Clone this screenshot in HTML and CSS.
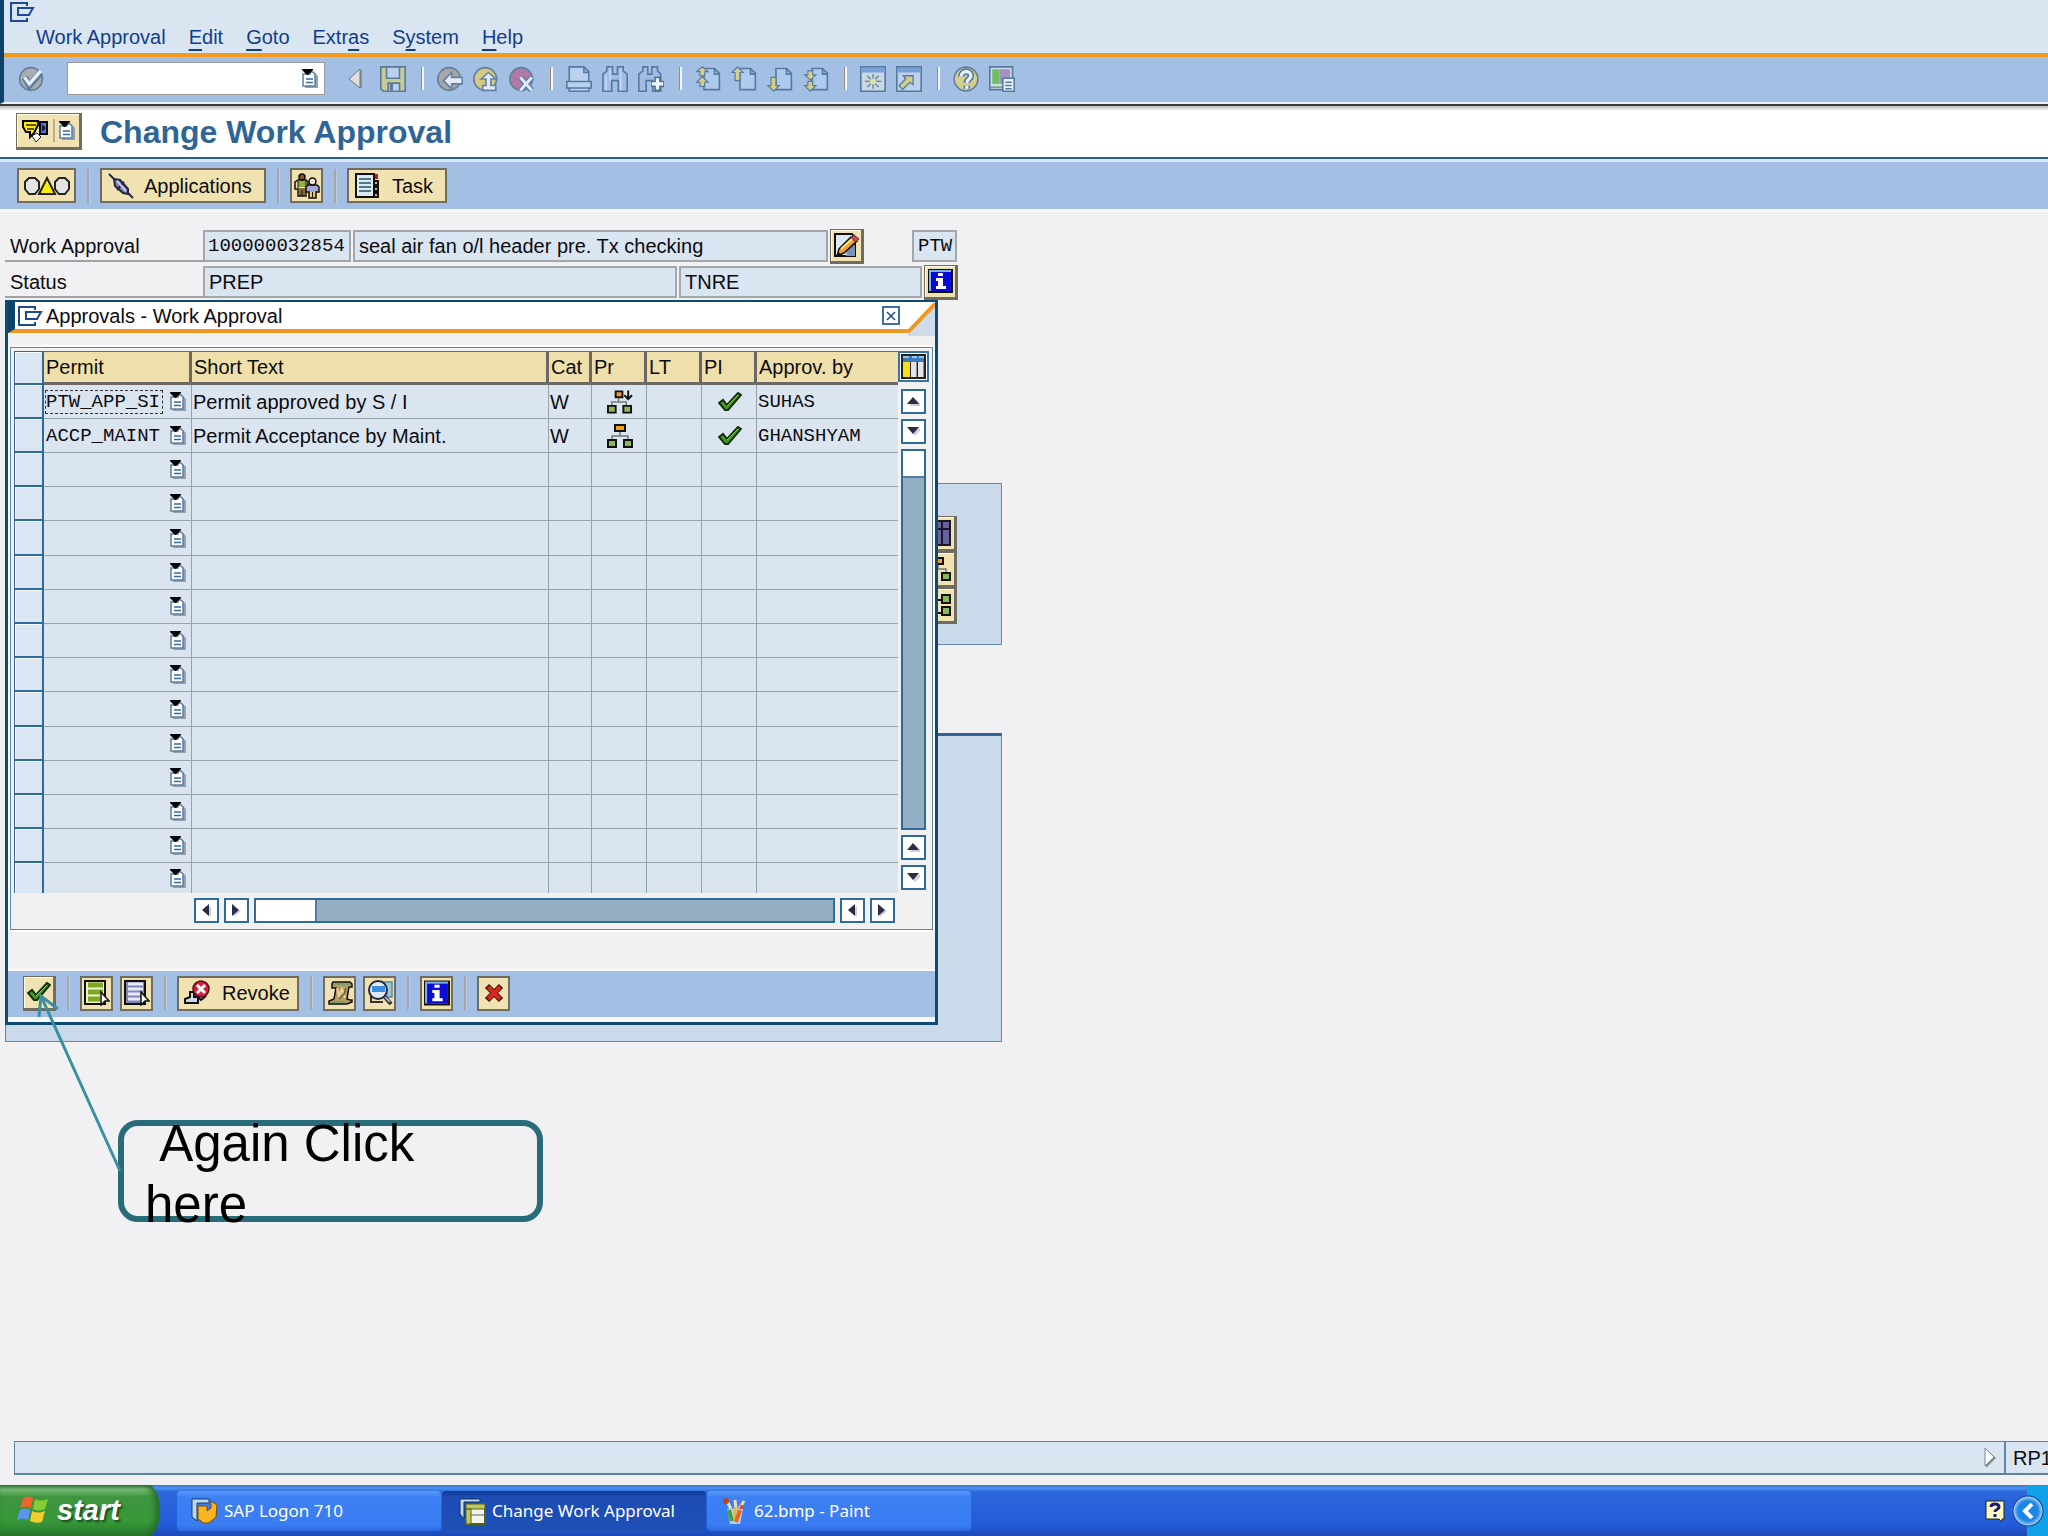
FILE: index.html
```html
<!DOCTYPE html>
<html lang="en">
<head>
<meta charset="utf-8">
<title>Change Work Approval</title>
<link rel="stylesheet" href="styles.css">
</head>
<body>
<svg class="defs" aria-hidden="true">
  <symbol id="i-win" viewBox="0 0 25 20"><path d="M17 4V1H1V19H17V16M8 6H23L19 13H8Z" fill="none" stroke="#1d4a96" stroke-width="2"/></symbol>
  <symbol id="i-list" viewBox="0 0 16 19"><path d="M3 4H13L16 7V19H3Z" fill="#93a0ae"/><path d="M1 5V17H13V5L11 3H8V5Z" fill="#fff" stroke="#5f7f9f" stroke-width="1.500"/><path d="M4 10H11M4 13.500H11" stroke="#3a6a9c" stroke-width="1.500"/><path d="M0 0H11V1L6 6H5L0 1Z" fill="#000"/></symbol>
  <symbol id="i-ok" viewBox="0 0 16 16"><circle cx="8" cy="8" r="7" fill="#a9adb0" stroke="#627f9e"/><path d="M4 7L7 12L14 4" fill="none" stroke="#5f7f9f" stroke-width="4"/><path d="M4 7L7 11L14 3" fill="none" stroke="#e6eefb" stroke-width="2"/></symbol>
  <symbol id="i-left" viewBox="0 0 16 22"><path d="M14 1V21L3 11Z" fill="#8f8f8f"/><path d="M12 1V20L1 11Z" fill="#dfdfdf" stroke="#777"/></symbol>
  <symbol id="i-save" viewBox="0 0 16 16"><path d="M.5 .5H15.500V15.500H2L.5 14Z" fill="#c9cb96" stroke="#5b7c98"/><path d="M4 .5H12V7.500H4ZM5 10.500H12V15.500H5Z" fill="#b9d0ee" stroke="#5b7c98"/><path d="M6 11V15H8V11Z" fill="#5b7c98"/></symbol>
  <symbol id="i-back" viewBox="0 0 16 16"><circle cx="7.500" cy="8" r="7" fill="#aaa6a8" stroke="#627f9e"/><path d="M4 9L9 4V7H15.500V11H9V14Z" fill="#e3eafa" stroke="#5f83a8"/></symbol>
  <symbol id="i-up" viewBox="0 0 16 16"><circle cx="7.500" cy="8" r="7" fill="#d3cb84" stroke="#627f9e"/><path d="M5 8L9.500 4L14 8H11V12H14V15H6V12H8V8Z" fill="#e3eafa" stroke="#5f83a8"/></symbol>
  <symbol id="i-stop" viewBox="0 0 16 16"><circle cx="7.500" cy="8" r="7" fill="#b07aa6" stroke="#627f9e"/><path d="M7 7L14 15M14 7L7 15" stroke="#5f83a8" stroke-width="3.500"/><path d="M7 7L14 15M14 7L7 15" stroke="#e3eafa" stroke-width="1.800"/></symbol>
  <symbol id="i-print" viewBox="0 0 16 16"><path d="M2 10V.5H11L14 3.500V10M11 .5V4H14M.5 9.500H15.500V13.500H14V15.500H2V13.500H.5ZM1 13.500H15" fill="#b9d0f0" stroke="#567a9e"/></symbol>
  <symbol id="i-find" viewBox="0 0 16 16"><path d="M.5 15.500V5L3 3V.5H6.500V5H9.500V.5H13V3L15.500 5V15.500H10V9H6V15.500Z" fill="#a3bce6" stroke="#567a9e"/><path d="M2.500 6V15M5 1V9M11.500 1V15" stroke="#c3d5f3"/></symbol>
  <symbol id="i-findn" viewBox="0 0 16 16"><path d="M.5 15.500V5L3 3V.5H6V5H8.500V.5H12V3L14 5V15.500H9V9H5V15.500Z" fill="#a3bce6" stroke="#567a9e"/><path d="M12 6.500V15.500M8 11H16" stroke="#4f7394" stroke-width="4"/><path d="M12 7.500V14.500M8.500 11H15.500" stroke="#eef5ff" stroke-width="2"/></symbol>
  <symbol id="i-page" viewBox="0 0 16 16"><path d="M5.500 1.500H12L15 4.500V14.500H5.500ZM12 1.500V5H15" fill="#aecbee" stroke="#567a9e"/></symbol>
  <symbol id="i-first" viewBox="0 0 16 16"><use href="#i-page"/><path d="M1 3.500L4.500 .5L8 3.500H6V6H3V3.500ZM1 10L4.500 6.500L8 10H6V12.500H3V10Z" fill="#d4ce86" stroke="#567a9e" stroke-width=".7"/></symbol>
  <symbol id="i-prev" viewBox="0 0 16 16"><use href="#i-page"/><path d="M.5 4L4 .5L7.500 4H5.500V9H2.500V4Z" fill="#d4ce86" stroke="#567a9e" stroke-width=".7"/></symbol>
  <symbol id="i-next" viewBox="0 0 16 16"><use href="#i-page"/><path d="M.5 12L4 15.500L7.500 12H5.500V7H2.500V12Z" fill="#d4ce86" stroke="#567a9e" stroke-width=".7"/></symbol>
  <symbol id="i-last" viewBox="0 0 16 16"><use href="#i-page"/><path d="M1 5.500L4.500 8.500L8 5.500H6V3H3V5.500ZM1 12L4.500 15.500L8 12H6V9.500H3V12Z" fill="#d4ce86" stroke="#567a9e" stroke-width=".7"/></symbol>
  <symbol id="i-new" viewBox="0 0 16 16"><path d="M.5 .5H15.500V15.500H.5Z" fill="#c8d6e6" stroke="#567a9e"/><path d="M1 1H15V4H1Z" fill="#77a0d8"/><path d="M8 5V14M3 9.500H13M4.500 6L11.500 13M11.500 6L4.500 13" stroke="#63808c" stroke-width=".8"/><circle cx="8" cy="9.500" r="1.800" fill="#e2e7a0"/></symbol>
  <symbol id="i-short" viewBox="0 0 16 16"><path d="M.5 .5H15.500V15.500H.5Z" fill="#bdd1ee" stroke="#567a9e"/><path d="M1 1H15V4H1Z" fill="#77a0d8"/><path d="M2 12L6 8L4.500 6H10.500V11.500L8.500 10L4 14.500Z" fill="#d4ce86" stroke="#567a9e" stroke-width=".8"/></symbol>
  <symbol id="i-help" viewBox="0 0 16 16"><circle cx="8" cy="8" r="7.300" fill="#d5cf8d" stroke="#627f9e"/><path d="M5 6.500C5 2.500 11 2.500 11 6C11 8 8.500 8 8.500 10.500M8.500 12V14" fill="none" stroke="#567a9e" stroke-width="4"/><path d="M5 6.500C5 2.500 11 2.500 11 6C11 8 8.500 8 8.500 10.500M8.500 12V14" fill="none" stroke="#e8effa" stroke-width="2"/></symbol>
  <symbol id="i-layout" viewBox="0 0 16 16"><path d="M.5 .5H14.500V12L13 14.500H.5Z" fill="#cfdcec" stroke="#567a9e"/><path d="M2 2H6.500V11H2Z" fill="#6fbf62"/><path d="M6.500 2H13V11H6.500Z" fill="#a58fc4"/><path d="M1 13H9" stroke="#6fa27a"/><path d="M8.500 7.500H15.500V15.500H8.500Z" fill="#eaf1fb" stroke="#567a9e"/><path d="M10 10H14M10 12H14M10 14H14" stroke="#567a9e" stroke-width=".8"/></symbol>
  <symbol id="i-svc" viewBox="0 0 27 24"><path d="M1 2H16V6L12 14L8 18V13H4L1 8Z" fill="#ffe90a" stroke="#000" stroke-width="2"/><path d="M4 6H14M5 10H12" stroke="#5a5200" stroke-width="2"/><path d="M18 3H25V15H18Z" fill="#3d86d8" stroke="#000" stroke-width="2"/><path d="M20 5L24 9L20 13Z" fill="#001a55"/><path d="M10 17L15 14L19 18L14 23Z" fill="#fff" stroke="#222"/></symbol>
  <symbol id="i-light" viewBox="0 0 48 20"><path d="M6 2H12L16 6V13L12 18H6L2 13V6Z" fill="#e4e4e4" stroke="#222" stroke-width="2"/><path d="M36 2H42L46 6V13L42 18H36L32 13V6Z" fill="#e4e4e4" stroke="#222" stroke-width="2"/><path d="M24 2L32 18H16Z" fill="#ffee00" stroke="#222" stroke-width="2"/></symbol>
  <symbol id="i-plug" viewBox="0 0 26 26"><path d="M1 1L25 25" stroke="#26263c" stroke-width="2"/><path d="M6 6L12 7L20 16L20 21L15 20L7 13Z" fill="#7f80b8" stroke="#26263c" stroke-width="2"/><path d="M16 9L9 17" stroke="#26263c" stroke-width="2"/><path d="M9 8L18 18" stroke="#c6c8ea" stroke-width="2"/></symbol>
  <symbol id="i-people" viewBox="0 0 26 26"><path d="M4 8H12V14H4Z" fill="#8fb23e"/><path d="M5 15H11V23H5Z" fill="#8a6a38"/><path d="M4 7H12L14 9V16H12V23H4V16H1V9Z" fill="none" stroke="#111" stroke-width="1.500"/><path d="M8 17V23M4 8V15M12 8V15" stroke="#111"/><circle cx="8" cy="4" r="3" fill="#8a5a28" stroke="#111" stroke-width="1.500"/><path d="M14 12H23L25 14V19H22V25H15V19H12V14Z" fill="#a6a8d4" stroke="#111" stroke-width="1.500"/><path d="M16 19H21V24H16Z" fill="#ecc870"/><path d="M18.500 19V24" stroke="#111"/><circle cx="18.500" cy="8.500" r="3.500" fill="#f2e4cf" stroke="#111" stroke-width="1.500"/></symbol>
  <symbol id="i-task" viewBox="0 0 26 26"><path d="M2 1H20V24H2Z" fill="#dfeaf0" stroke="#111" stroke-width="2"/><path d="M5 6H17M5 10H17M5 14H17M5 18H17" stroke="#4c7a88" stroke-width="2"/><path d="M21 1H24V6H21Z" fill="#c01818"/><path d="M20 8H24V12H20ZM20 14H24V18H20ZM20 20H24V24H20Z" fill="#c9c060" stroke="#111" stroke-width="2"/></symbol>
  <symbol id="i-edit" viewBox="0 0 26 26"><path d="M2 2H19L22 5V24H2Z" fill="#dce8f4" stroke="#111" stroke-width="2"/><path d="M15 13H22V24H13Z" fill="#7b93b2"/><path d="M4 24L6 17L18 5L24 9L11 21Z" fill="#f2a028" stroke="#111" stroke-width="1.500"/><path d="M18 6L21 3L26 7L23 10Z" fill="#c2504a" stroke="#58304a"/><path d="M8 17L19 7" stroke="#ffdf9a" stroke-width="2"/><path d="M4 25L5 20L9 23Z" fill="#111"/></symbol>
  <symbol id="i-info" viewBox="0 0 25 24"><path d="M0 0H25V24H0Z" fill="#111"/><path d="M1 1H23V22H1Z" fill="#7fb0e8"/><path d="M3 3H23V22H3Z" fill="#0b0bd8"/><path d="M10 4H15V7H10ZM8 9H15V17H18V20H8V17H10V12H8Z" fill="#fff"/></symbol>
  <symbol id="i-cfg" viewBox="0 0 25 25"><path d="M0 0H25V25H0Z" fill="#222"/><path d="M2 2H23V8H2Z" fill="#3d7cba"/><path d="M2 3H8M11 3H16M18 3H23" stroke="#9cc4e6" stroke-width="2"/><path d="M2 8H9V23H2Z" fill="#f6e01e"/><path d="M10 8H16V23H10ZM17 8H23V23H17Z" fill="#e2e4e8"/><path d="M15.500 8V23M22.500 8V23" stroke="#8d9096"/></symbol>
  <symbol id="i-check" viewBox="0 0 24 20"><path d="M1 11L5 8L9 13L20 1L23 3L10 18H7Z" fill="#4a9a20" stroke="#10300a" stroke-width="2"/><path d="M9 14L20 3" stroke="#8ccc55"/></symbol>
  <symbol id="i-tree" viewBox="0 0 26 24"><path d="M13 8V12M5 16V12H21V16" fill="none" stroke="#777" stroke-width="1.500"/><path d="M8 1H18V7H8Z" fill="#f0a020" stroke="#111" stroke-width="2"/><path d="M1 16H9V23H1ZM17 16H25V23H17Z" fill="#8cb858" stroke="#111" stroke-width="2"/></symbol>
  <symbol id="i-treed" viewBox="0 0 27 24"><path d="M12 8V12M5 16V12H20V16" fill="none" stroke="#777" stroke-width="1.500"/><path d="M9 1H16V7H9Z" fill="#f0a020" stroke="#111" stroke-width="2"/><path d="M1 16H9V23H1ZM17 16H25V23H17Z" fill="#8cb858" stroke="#111" stroke-width="2"/><path d="M22 0V9M18 5L22 9L26 5" fill="none" stroke="#111" stroke-width="2"/></symbol>
  <symbol id="i-treeh" viewBox="0 0 26 24"><path d="M9 3H12V20H18M12 7H18" fill="none" stroke="#111" stroke-width="2"/><path d="M17 2H25V10H17ZM17 14H25V22H17Z" fill="#8cb858" stroke="#111" stroke-width="2"/></symbol>
  <symbol id="i-grid" viewBox="0 0 26 26"><path d="M1 1H25V25H1ZM1 9H25M9 1V25M17 1V25" fill="#66639c" stroke="#1a1728" stroke-width="2"/></symbol>
  <symbol id="i-selall" viewBox="0 0 26 26"><path d="M1 1H21V24H1Z" fill="#eef4d0" stroke="#111" stroke-width="2"/><path d="M4 5H19M4 12H19M4 19H16" stroke="#7fa81c" stroke-width="5"/><path d="M17 12L25 21L21 21L17 25Z" fill="#fff" stroke="#111" stroke-width="1.500"/></symbol>
  <symbol id="i-desel" viewBox="0 0 26 26"><path d="M1 1H21V24H1Z" fill="#8085b8" stroke="#111" stroke-width="2"/><path d="M4 4H19M4 9H19M4 14H17M4 19H17" stroke="#e8eaf8" stroke-width="3"/><path d="M17 12L25 21L21 21L17 25Z" fill="#fff" stroke="#111" stroke-width="1.500"/></symbol>
  <symbol id="i-revoke" viewBox="0 0 26 26"><path d="M6 12H10V17H14V23H1V19L6 17Z" fill="#cfd8e6" stroke="#111" stroke-width="2"/><path d="M13 16L17 20L22 16" fill="none" stroke="#111" stroke-width="2"/><circle cx="17" cy="9" r="8" fill="#d8203a" stroke="#4b1018" stroke-width="1.500"/><path d="M13 5L21 13M21 5L13 13" stroke="#fff" stroke-width="3"/></symbol>
  <symbol id="i-scroll" viewBox="0 0 26 26"><path d="M6 2H23L25 4V7H22L20 19L23 20H25V22L20 24H2V21L7 19L9 8H5V4Z" fill="#b99a62" stroke="#111" stroke-width="1.500"/><path d="M6 4H23M3 22H18" stroke="#7da06b" stroke-width="2"/><path d="M10 8L12 16L15 9L18 18" fill="none" stroke="#ecd09a" stroke-width="2"/><path d="M19 8L17 14L12 19" fill="none" stroke="#6e6238" stroke-width="1.500"/></symbol>
  <symbol id="i-mag" viewBox="0 0 26 26"><path d="M6 2H25V17H13" fill="#9fc8d6" stroke="#5a88a0" stroke-width="1.500"/><path d="M4 16V22H16" fill="none" stroke="#333" stroke-width="2"/><circle cx="11" cy="10" r="9" fill="#dfeaf6" stroke="#26263c" stroke-width="2"/><path d="M5 6H18V12H5Z" fill="#3a8fe0"/><path d="M17 16L24 24" stroke="#26263c" stroke-width="4"/><path d="M18 17L23 22" stroke="#a8a8d0" stroke-width="2"/></symbol>
  <symbol id="i-x" viewBox="0 0 20 20"><path d="M3 3L17 17M17 3L3 17" stroke="#40100c" stroke-width="6"/><path d="M4 4L16 16M16 4L4 16" stroke="#d8281c" stroke-width="4"/></symbol>
  <symbol id="a-up" viewBox="0 0 13 9"><path d="M2 9H13V6L9 2Z" fill="#cfcbe6"/><path d="M0 7L6 0L12 7Z" fill="#2c2c40"/></symbol>
  <symbol id="a-down" viewBox="0 0 13 9"><path d="M2 2H13V4L8 9Z" fill="#cfcbe6"/><path d="M0 0H12L6 7Z" fill="#2c2c40"/></symbol>
  <symbol id="a-left" viewBox="0 0 9 13"><path d="M9 2V13L3 8Z" fill="#cfcbe6"/><path d="M7 0V12L0 6Z" fill="#2c2c40"/></symbol>
  <symbol id="a-right" viewBox="0 0 9 13"><path d="M2 13V4L9 7Z" fill="#cfcbe6"/><path d="M0 0V12L7 6Z" fill="#2c2c40"/></symbol>
</svg>

<header class="top">
  <svg class="win-icon"><use href="#i-win"/></svg>
  <nav class="menu" aria-label="Menu">
    <button>Work Approval</button><button><u>E</u>dit</button><button><u>G</u>oto</button><button>Extr<u>a</u>s</button><button>S<u>y</u>stem</button><button><u>H</u>elp</button>
  </nav>
  <div class="toolbar">
    <button class="tool" aria-label="Enter"><svg><use href="#i-ok"/></svg></button>
    <div class="command"><input type="text" aria-label="Command"><button class="pick" aria-label="Command history"><svg><use href="#i-list"/></svg></button></div>
    <div class="group wide">
      <button class="tool narrow" aria-label="Hide command field"><svg><use href="#i-left"/></svg></button>
      <button class="tool" aria-label="Save"><svg><use href="#i-save"/></svg></button>
    </div>
    <i class="sep"></i>
    <div class="group">
      <button class="tool" aria-label="Back"><svg><use href="#i-back"/></svg></button>
      <button class="tool" aria-label="Exit"><svg><use href="#i-up"/></svg></button>
      <button class="tool" aria-label="Cancel"><svg><use href="#i-stop"/></svg></button>
    </div>
    <i class="sep"></i>
    <div class="group">
      <button class="tool" aria-label="Print"><svg><use href="#i-print"/></svg></button>
      <button class="tool" aria-label="Find"><svg><use href="#i-find"/></svg></button>
      <button class="tool" aria-label="Find next"><svg><use href="#i-findn"/></svg></button>
    </div>
    <i class="sep"></i>
    <div class="group">
      <button class="tool" aria-label="First page"><svg><use href="#i-first"/></svg></button>
      <button class="tool" aria-label="Previous page"><svg><use href="#i-prev"/></svg></button>
      <button class="tool" aria-label="Next page"><svg><use href="#i-next"/></svg></button>
      <button class="tool" aria-label="Last page"><svg><use href="#i-last"/></svg></button>
    </div>
    <i class="sep"></i>
    <div class="group">
      <button class="tool" aria-label="New session"><svg><use href="#i-new"/></svg></button>
      <button class="tool" aria-label="Create shortcut"><svg><use href="#i-short"/></svg></button>
    </div>
    <i class="sep"></i>
    <div class="group">
      <button class="tool" aria-label="Help"><svg><use href="#i-help"/></svg></button>
      <button class="tool" aria-label="Customize layout"><svg><use href="#i-layout"/></svg></button>
    </div>
  </div>
</header>

<div class="title-row">
  <button class="btn raised services" aria-label="Services for object"><svg class="svc"><use href="#i-svc"/></svg><i class="line"></i><svg class="list"><use href="#i-list"/></svg></button>
  <h1>Change Work Approval</h1>
</div>

<div class="app-bar">
  <button class="btn lights" aria-label="Status"><svg><use href="#i-light"/></svg></button>
  <i class="bar"></i>
  <button class="btn text apps"><svg><use href="#i-plug"/></svg>Applications</button>
  <i class="bar"></i>
  <button class="btn" aria-label="Partner"><svg><use href="#i-people"/></svg></button>
  <i class="bar"></i>
  <button class="btn text task"><svg><use href="#i-task"/></svg>Task</button>
</div>

<main>
  <form class="form">
    <div class="form-row">
      <label for="wa">Work Approval</label>
      <input id="wa" class="field mono number" value="100000032854" readonly>
      <input class="field desc" aria-label="Description" value="seal air fan o/l header pre. Tx checking" readonly>
      <button type="button" class="btn raised" aria-label="Edit text"><svg><use href="#i-edit"/></svg></button>
      <input class="field mono type" aria-label="Type" value="PTW" readonly>
    </div>
    <div class="form-row">
      <label for="st">Status</label>
      <input id="st" class="field status" value="PREP" readonly>
      <input class="field user-status" aria-label="User status" value="TNRE" readonly>
      <button type="button" class="btn raised" aria-label="Status information"><svg><use href="#i-info"/></svg></button>
    </div>
  </form>
  <section class="panel upper">
    <button class="btn raised" aria-label="Table"><svg><use href="#i-grid"/></svg></button>
    <button class="btn raised" aria-label="Structure"><svg><use href="#i-tree"/></svg></button>
    <button class="btn raised" aria-label="Hierarchy"><svg><use href="#i-treeh"/></svg></button>
  </section>
  <section class="panel lower"></section>

  <section class="dialog" role="dialog" aria-labelledby="dlg">
    <div class="dlg-head">
      <div class="dlg-title"><svg class="win-icon"><use href="#i-win"/></svg><h2 id="dlg">Approvals - Work Approval</h2>
        <button class="close" aria-label="Close"><svg viewBox="0 0 10 10"><path d="M1 1L9 9M9 1L1 9" stroke="#1d4a96" stroke-width="1.500"/></svg></button></div>
      <svg class="corner" viewBox="0 0 27 34"><path d="M0 0H27V34H0Z" fill="#d0dbe8"/><path d="M0 0H27L1 28H0Z" fill="#fff"/><path d="M0 29H1L27 2" fill="none" stroke="#ee9a22" stroke-width="4"/></svg>
    </div>
    <div class="frame">
      <table>
        <colgroup><col class="c-sel"><col class="c-permit"><col class="c-short"><col class="c-cat"><col class="c-flag"><col class="c-flag"><col class="c-flag"><col class="c-by"></colgroup>
        <thead><tr><th class="sel"></th><th>Permit</th><th>Short Text</th><th>Cat</th><th>Pr</th><th>LT</th><th>PI</th><th>Approv. by</th></tr></thead>
        <tbody>
          <tr><td class="sel"></td><td><div class="permit"><input class="focus" aria-label="Permit 1" value="PTW_APP_SI"><button class="pick" aria-label="Choose"><svg><use href="#i-list"/></svg></button></div></td><td>Permit approved by S / I</td><td>W</td><td class="ic"><svg><use href="#i-treed"/></svg></td><td></td><td class="ic"><svg class="chk"><use href="#i-check"/></svg></td><td class="mono">SUHAS</td></tr>
          <tr><td class="sel"></td><td><div class="permit"><input aria-label="Permit 2" value="ACCP_MAINT"><button class="pick" aria-label="Choose"><svg><use href="#i-list"/></svg></button></div></td><td>Permit Acceptance by Maint.</td><td>W</td><td class="ic"><svg><use href="#i-tree"/></svg></td><td></td><td class="ic"><svg class="chk"><use href="#i-check"/></svg></td><td class="mono">GHANSHYAM</td></tr>
          <tr><td class="sel"></td><td><div class="permit"><input aria-label="Permit 3"><button class="pick" aria-label="Choose"><svg><use href="#i-list"/></svg></button></div></td><td></td><td></td><td></td><td></td><td></td><td></td></tr>
          <tr><td class="sel"></td><td><div class="permit"><input aria-label="Permit 4"><button class="pick" aria-label="Choose"><svg><use href="#i-list"/></svg></button></div></td><td></td><td></td><td></td><td></td><td></td><td></td></tr>
          <tr><td class="sel"></td><td><div class="permit"><input aria-label="Permit 5"><button class="pick" aria-label="Choose"><svg><use href="#i-list"/></svg></button></div></td><td></td><td></td><td></td><td></td><td></td><td></td></tr>
          <tr><td class="sel"></td><td><div class="permit"><input aria-label="Permit 6"><button class="pick" aria-label="Choose"><svg><use href="#i-list"/></svg></button></div></td><td></td><td></td><td></td><td></td><td></td><td></td></tr>
          <tr><td class="sel"></td><td><div class="permit"><input aria-label="Permit 7"><button class="pick" aria-label="Choose"><svg><use href="#i-list"/></svg></button></div></td><td></td><td></td><td></td><td></td><td></td><td></td></tr>
          <tr><td class="sel"></td><td><div class="permit"><input aria-label="Permit 8"><button class="pick" aria-label="Choose"><svg><use href="#i-list"/></svg></button></div></td><td></td><td></td><td></td><td></td><td></td><td></td></tr>
          <tr><td class="sel"></td><td><div class="permit"><input aria-label="Permit 9"><button class="pick" aria-label="Choose"><svg><use href="#i-list"/></svg></button></div></td><td></td><td></td><td></td><td></td><td></td><td></td></tr>
          <tr><td class="sel"></td><td><div class="permit"><input aria-label="Permit 10"><button class="pick" aria-label="Choose"><svg><use href="#i-list"/></svg></button></div></td><td></td><td></td><td></td><td></td><td></td><td></td></tr>
          <tr><td class="sel"></td><td><div class="permit"><input aria-label="Permit 11"><button class="pick" aria-label="Choose"><svg><use href="#i-list"/></svg></button></div></td><td></td><td></td><td></td><td></td><td></td><td></td></tr>
          <tr><td class="sel"></td><td><div class="permit"><input aria-label="Permit 12"><button class="pick" aria-label="Choose"><svg><use href="#i-list"/></svg></button></div></td><td></td><td></td><td></td><td></td><td></td><td></td></tr>
          <tr><td class="sel"></td><td><div class="permit"><input aria-label="Permit 13"><button class="pick" aria-label="Choose"><svg><use href="#i-list"/></svg></button></div></td><td></td><td></td><td></td><td></td><td></td><td></td></tr>
          <tr><td class="sel"></td><td><div class="permit"><input aria-label="Permit 14"><button class="pick" aria-label="Choose"><svg><use href="#i-list"/></svg></button></div></td><td></td><td></td><td></td><td></td><td></td><td></td></tr>
          <tr><td class="sel"></td><td><div class="permit"><input aria-label="Permit 15"><button class="pick" aria-label="Choose"><svg><use href="#i-list"/></svg></button></div></td><td></td><td></td><td></td><td></td><td></td><td></td></tr>
        </tbody>
      </table>
      <div class="vscroll">
        <button class="config" aria-label="Table settings"><svg><use href="#i-cfg"/></svg></button>
        <button class="arrow" aria-label="Scroll up"><svg><use href="#a-up"/></svg></button>
        <button class="arrow" aria-label="Scroll down"><svg><use href="#a-down"/></svg></button>
        <div class="track"><div class="thumb"></div></div>
        <button class="arrow" aria-label="Page up"><svg><use href="#a-up"/></svg></button>
        <button class="arrow" aria-label="Page down"><svg><use href="#a-down"/></svg></button>
      </div>
      <div class="hscroll">
        <button class="arrow side" aria-label="Scroll left"><svg><use href="#a-left"/></svg></button>
        <button class="arrow side" aria-label="Scroll right"><svg><use href="#a-right"/></svg></button>
        <div class="track"><div class="thumb"></div></div>
        <button class="arrow side" aria-label="Page left"><svg><use href="#a-left"/></svg></button>
        <button class="arrow side" aria-label="Page right"><svg><use href="#a-right"/></svg></button>
      </div>
    </div>
    <div class="dlg-bar">
      <button class="btn raised" aria-label="Continue"><svg class="chk"><use href="#i-check"/></svg></button>
      <i class="bar"></i>
      <div class="pair"><button class="btn" aria-label="Select all"><svg><use href="#i-selall"/></svg></button><button class="btn" aria-label="Deselect all"><svg><use href="#i-desel"/></svg></button></div>
      <i class="bar"></i>
      <button class="btn text revoke"><svg><use href="#i-revoke"/></svg>Revoke</button>
      <i class="bar"></i>
      <div class="pair"><button class="btn" aria-label="Log"><svg><use href="#i-scroll"/></svg></button><button class="btn" aria-label="Display"><svg><use href="#i-mag"/></svg></button></div>
      <i class="bar"></i>
      <button class="btn" aria-label="Information"><svg><use href="#i-info"/></svg></button>
      <i class="bar"></i>
      <button class="btn" aria-label="Cancel"><svg class="cross"><use href="#i-x"/></svg></button>
    </div>
  </section>

  <p class="callout">&nbsp;Again Click here</p>
  <svg class="pointer" viewBox="0 0 90 180" aria-hidden="true"><path d="M84 178L5 3M3 24L5 3L22 16" fill="none" stroke="#3b8fa3" stroke-width="3"/></svg>
</main>

<footer class="status-bar">
  <div class="message"><svg viewBox="0 0 12 21"><path d="M2 2L12 11L2 21Z" fill="#8a8a8a"/><path d="M1 1L10 10L1 19Z" fill="#fff" stroke="#7488a0"/></svg></div>
  <div class="system">RP1</div>
</footer>

<nav class="taskbar" aria-label="Taskbar">
  <button class="start"><svg viewBox="0 0 32 30"><path d="M6 3Q11 0 16 3L14 13Q9 10 3 13Z" fill="#f0642c"/><path d="M18 4Q24 7 31 4L28 14Q22 17 16 14Z" fill="#86cc34"/><path d="M3 15Q8 12 13 15L11 25Q6 22 0 25Z" fill="#5c94f4"/><path d="M15 16Q21 19 28 16L25 27Q19 29 13 26Z" fill="#f8cc28"/></svg>start</button>
  <div class="tasks">
    <button class="entry"><svg viewBox="0 0 28 28"><path d="M1 2H18V6H6V24L1 20Z" fill="#bcd8ee" stroke="#143a68"/><path d="M7 9H16V14L20 11V4L26 8L25 20L18 26H12L9 23H7Z" fill="#f8b422" stroke="#7a4a08"/></svg><span>SAP Logon 710</span></button>
    <button class="entry active"><svg viewBox="0 0 28 28"><path d="M1 2H21V5H5V22L1 17Z" fill="#bcd8ee" stroke="#102c58"/><path d="M7 7H26V27H7Z" fill="#f4f4ee" stroke="#55601a" stroke-width="2"/><path d="M7 7H26V12H7ZM7 12H12V27H7Z" fill="#c4c85c" stroke="#55601a"/><path d="M12 18H26" stroke="#666"/></svg><span>Change Work Approval</span></button>
    <button class="entry"><svg viewBox="0 0 28 28"><path d="M10 12L6 4M15 12L14 3M18 12L23 4" stroke="#e8dcc0" stroke-width="3"/><circle cx="5" cy="4" r="3" fill="#b8481c"/><path d="M21 8L17 22" stroke="#e05020" stroke-width="3"/><path d="M6 12H22L19 27H9Z" fill="#d7e4dc" opacity=".8"/><path d="M8 13L11 24" stroke="#3ea040" stroke-width="4"/><path d="M14 10V22" stroke="#f0b428" stroke-width="3"/><path d="M19 13L15 25" stroke="#e8642c" stroke-width="4"/></svg><span>62.bmp - Paint</span></button>
  </div>
  <svg class="tip" viewBox="0 0 20 22"><path d="M1 1H19V19H17V22L14 19H1Z" fill="#fffbc0" stroke="#222"/><path d="M6 7C6 3 14 3 14 7C14 10 10 9 10 12M10 14V17" fill="none" stroke="#1a1a78" stroke-width="3"/></svg>
  <button class="expand" aria-label="Show hidden icons"><svg viewBox="0 0 12 16"><path d="M10 1L3 8L10 15" fill="none" stroke="#fff" stroke-width="4"/></svg></button>
</nav>
</body>
</html>
```
FILE: styles.css
```css
* { box-sizing: border-box; }

body {
  margin: 0;
  min-height: 100vh;
  display: flex;
  flex-direction: column;
  overflow-x: hidden;
  background: #f1f1f3;
  color: #0c0c10;
  font: 20px/24px "Liberation Sans", Arial, sans-serif;
}

button, input {
  font: inherit;
  color: inherit;
  margin: 0;
  padding: 0;
  border: 0;
  border-radius: 0;
  background: none;
}

input { min-width: 0; outline: 0; }
svg { display: block; flex: none; }
.defs { position: absolute; width: 0; height: 0; }
.mono { font-family: "Liberation Mono", monospace; font-size: 19px; }

/* Menu and standard toolbar */
.top {
  border-left: 4px solid #0b4268;
  border-bottom: 2px solid #eef3f9;
  background: #d9e5f1;
}
.win-icon { width: 25px; height: 20px; }
.top > .win-icon { margin: 2px 0 0 6px; }
.menu {
  display: flex;
  gap: 23px;
  padding: 3px 0 4px 32px;
  color: #123d8c;
}
.menu u { text-decoration-thickness: 2px; text-underline-offset: 5px; text-decoration-skip-ink: none; }
.toolbar {
  display: flex;
  align-items: center;
  height: 49px;
  padding: 0 0 2px 14px;
  border-top: 4px solid #f09a20;
  background: #a3bfe4;
}
.tool, .tool svg { width: 26px; height: 26px; }
.narrow, .narrow svg { width: 16px; height: 22px; }
.command {
  display: flex;
  align-items: center;
  width: 258px;
  height: 33px;
  margin: 0 23px;
  padding-right: 6px;
  border: 1px solid #9a9a9a;
  background: #fff;
}
.command input { flex: 1; padding-left: 6px; }
.pick, .pick svg { width: 16px; height: 19px; }
.group { display: flex; align-items: center; gap: 10px; }
.wide { gap: 16px; }
.sep {
  width: 3px;
  height: 23px;
  margin: 0 13px 0 15px;
  border-left: 1px solid #8f8c90;
  background: #f6f6f6;
}

/* Title and application toolbar */
.title-row {
  display: flex;
  align-items: center;
  gap: 18px;
  height: 55px;
  padding: 0 16px;
  border-top: 2px solid #3c3c3c;
  border-bottom: 2px solid #2d5f8a;
  background: linear-gradient(#b8b8b8, #fff 5px);
}
h1 { margin: 0; color: #2f6596; font-size: 32px; line-height: 36px; }
.btn {
  display: flex;
  align-items: center;
  justify-content: center;
  width: 33px;
  height: 35px;
  border: 2px solid #716c60;
  background: #f1e2b1;
}
.btn svg { width: 26px; height: 26px; }
.raised { border-width: 1px 3px 3px 1px; box-shadow: inset 1px 1px #fffbe8; }
.services { gap: 4px; width: 66px; height: 37px; }
.services .svc { width: 27px; height: 24px; }
.services .list { width: 16px; height: 19px; }
.line { width: 2px; height: 23px; background: #b8ae90; }
.app-bar {
  display: flex;
  align-items: center;
  height: 53px;
  padding-left: 17px;
  border-top: 3px solid #d9e8f8;
  border-bottom: 3px solid #f4f8fd;
  background: #a3bfe4;
}
.bar { width: 3px; height: 34px; margin: 0 10px 0 11px; background: #a6a6a6; border-right: 1px solid #bccbdf; }
.lights { width: 59px; }
.lights svg { width: 48px; height: 20px; }
.text { justify-content: flex-start; padding-left: 6px; gap: 10px; }
.apps { width: 166px; }
.task { width: 100px; gap: 12px; padding-left: 5px; }

/* Work area */
main { position: relative; flex: 1; padding: 18px 5px; }
.form { display: flex; flex-direction: column; gap: 4px; }
.form-row { display: flex; height: 32px; gap: 2px; align-items: center; }
.form-row label {
  width: 198px;
  height: 32px;
  margin-right: -2px;
  padding: 4px 0 0 5px;
  border-bottom: 2px solid #a2a2a2;
}
.field {
  height: 32px;
  padding-left: 4px;
  border: 2px solid #a3a6aa;
  background: #d9e5f1;
}
.number { width: 148px; padding-left: 3px; }
.desc { width: 475px; }
.type { width: 45px; margin-left: 46px; }
.status { width: 474px; }
.user-status { width: 243px; }
.form-row .btn { width: 34px; }
.form-row:last-child svg { width: 25px; height: 24px; }
.panel {
  width: 997px;
  border: 1px solid #5f86ae;
  background: #cbdaea;
}
.upper {
  display: flex;
  flex-direction: column;
  align-items: flex-end;
  min-height: 162px;
  margin-top: 185px;
  padding: 32px 44px 0 0;
}
.upper .btn { width: 36px; height: 36px; }
.lower { min-height: 309px; margin-top: 88px; border-top: 3px solid #2f6596; }

/* Approvals dialog */
.dialog {
  position: absolute;
  left: 5px;
  top: 88px;
  width: 933px;
  border: 3px solid #0f4a72;
  border-top-width: 2px;
  background: #f1f1f2;
}
.dlg-head { display: flex; height: 34px; }
.dlg-title {
  flex: 1;
  display: flex;
  align-items: center;
  height: 31px;
  padding-left: 3px;
  border-left: 7px solid #0b4268;
  border-bottom: 4px solid #ee9a22;
  background: #fff;
}
h2 { flex: 1; margin: 0 0 0 3px; font-size: 20px; line-height: 24px; font-weight: 400; }
.close {
  display: grid;
  place-items: center;
  width: 18px;
  height: 19px;
  margin-right: 8px;
  border: 2px solid #3c6ea8;
}
.close svg { width: 10px; height: 10px; }
.corner { width: 27px; height: 34px; }
.frame {
  display: grid;
  grid-template-columns: 1fr 31px;
  margin: 11px 2px 0;
  padding: 3px 3px 6px;
  border: 1px solid #5f86ae;
  box-shadow: 0 0 0 2px #fff;
}
table { width: 100%; table-layout: fixed; border-collapse: separate; border-spacing: 0; }
.c-sel { width: 30px; }
.c-permit { width: 148px; }
.c-cat { width: 43px; }
.c-flag { width: 55px; }
.c-by { width: 141px; }
th {
  height: 34px;
  padding: 0 0 0 2px;
  border: solid #6c6866;
  border-width: 1px 3px 3px 0;
  background: #efdfaa;
  font-weight: 400;
  text-align: left;
}
th:last-child { border-right: 0; }
td {
  height: 34px;
  padding: 0 0 0 1px;
  border: solid #96a3ab;
  border-width: 0 1px 1px 0;
  background: #dbe5f0;
  white-space: nowrap;
}
tr:nth-child(5n) td { height: 35px; }
tr:last-child td { height: 30px; border-bottom: 0; }
td:last-child { border-right: 0; }
th.sel, td.sel {
  padding: 0;
  border: solid #2f6a9c;
  border-width: 0 2px 2px 1px;
  background: #dbe6f2;
  box-shadow: inset 1px 1px #f4faff;
}
th.sel { border-top-width: 1px; }
.permit { display: flex; align-items: center; height: 24px; }
.permit input {
  width: 118px;
  height: 24px;
  margin-right: 7px;
  font: 19px/22px "Liberation Mono", monospace;
  border: 1px solid transparent;
}
.permit .focus { border: 1px dashed #333; }
.ic svg { width: 26px; height: 24px; margin: 0 auto; }
.ic .chk, .btn .chk { width: 24px; height: 20px; }
.vscroll {
  display: flex;
  flex-direction: column;
  align-items: center;
  gap: 5px;
  padding-bottom: 3px;
}
.config {
  display: grid;
  place-items: center;
  width: 31px;
  height: 31px;
  margin-bottom: 2px;
  border: 2px solid #3c74a8;
  background: #fff;
}
.config svg { width: 25px; height: 25px; }
.arrow {
  display: grid;
  place-items: center;
  width: 25px;
  height: 25px;
  border: 2px solid #2f6a9c;
  background: #fff;
}
.arrow svg { width: 13px; height: 9px; }
.side svg { width: 9px; height: 13px; }
.track { border: 2px solid #2f6a9c; background: #93afc1; }
.thumb { background: #fff; }
.vscroll .track { flex: 1; width: 25px; }
.vscroll .thumb { height: 27px; border-bottom: 2px solid #4f7ea8; }
.hscroll { display: flex; gap: 5px; padding: 5px 3px 0 180px; }
.hscroll .track { flex: 1; height: 25px; }
.hscroll .thumb { width: 61px; height: 21px; border-right: 2px solid #4f7ea8; }
.dlg-bar {
  display: flex;
  align-items: center;
  height: 51px;
  margin-top: 41px;
  padding: 0 0 2px 15px;
  border-bottom: 5px solid #f6f9fc;
  background: #a3bfe4;
  box-shadow: 0 -2px #fff;
}
.dlg-bar .bar { margin: 0 10px 0 11px; }
.pair { display: flex; gap: 7px; }
.revoke { width: 122px; gap: 12px; padding-left: 5px; }
.btn .cross { width: 20px; height: 20px; }

/* Instruction callout */
.callout {
  position: absolute;
  left: 118px;
  top: 908px;
  width: 425px;
  height: 102px;
  margin: 0;
  padding: 5px 100px 0 21px;
  border: 6px solid #286c79;
  border-radius: 20px;
  color: #000;
  font-size: 51px;
  line-height: 61px;
  display: flex;
  align-items: center;
}
.pointer { position: absolute; left: 36px; top: 781px; width: 90px; height: 180px; }

/* Status bar and taskbar */
.status-bar {
  display: flex;
  height: 34px;
  margin: 0 0 10px 14px;
  border: 1px solid #5f7fa4;
  border-right: 0;
  border-bottom-width: 2px;
  background: #d9e5f1;
}
.message { flex: 1; display: flex; align-items: center; justify-content: flex-end; padding-right: 8px; }
.message svg { width: 12px; height: 21px; }
.system { width: 44px; padding: 4px 0 0 7px; border-left: 2px solid #5f86ae; white-space: nowrap; }
.taskbar {
  display: flex;
  align-items: center;
  height: 51px;
  background: linear-gradient(#3a70c8, #4a93f0 3px, #2c66dc 7px, #235cd8 40px, #1b48b4);
}
.start {
  display: flex;
  align-items: center;
  gap: 8px;
  width: 160px;
  height: 51px;
  padding: 0 0 2px 17px;
  border-radius: 0 12px 12px 0 / 0 25px 25px 0;
  background: linear-gradient(#2c7a34, #7cbc78 4px, #3f953f 12px, #37983a 36px, #2a7a2c);
  box-shadow: inset -4px 0 6px #246a28;
  color: #fff;
  font-size: 29px;
  font-weight: 700;
  font-style: italic;
  text-shadow: 2px 2px 2px #1f4f22;
}
.start svg { width: 32px; height: 30px; }
.tasks { flex: 1; display: flex; gap: 1px; padding-left: 17px; }
.entry {
  display: flex;
  align-items: center;
  gap: 5px;
  width: 264px;
  height: 40px;
  padding-left: 14px;
  border-radius: 4px;
  background: linear-gradient(#5a9af8, #3c80f4 6px, #3a7cf2 34px, #2f6ade);
  color: #fff;
  font: 17px/24px "Noto Sans", sans-serif;
}
.entry svg { width: 28px; height: 28px; }
.active { padding-left: 17px; background: linear-gradient(#123a90, #1c4cb4 6px, #1e50b8); }
.tip { width: 20px; height: 22px; margin-right: 8px; }
.expand {
  display: grid;
  place-items: center;
  width: 35px;
  height: 51px;
  background: radial-gradient(circle at 15px 26px, #1b86e8 10px, #9cc8f0 14px, #0e3fa0 15px, transparent 16px), linear-gradient(90deg, transparent 14px, #10a0e8 14px);
  padding-right: 5px;
}
.expand svg { width: 12px; height: 16px; }
```
